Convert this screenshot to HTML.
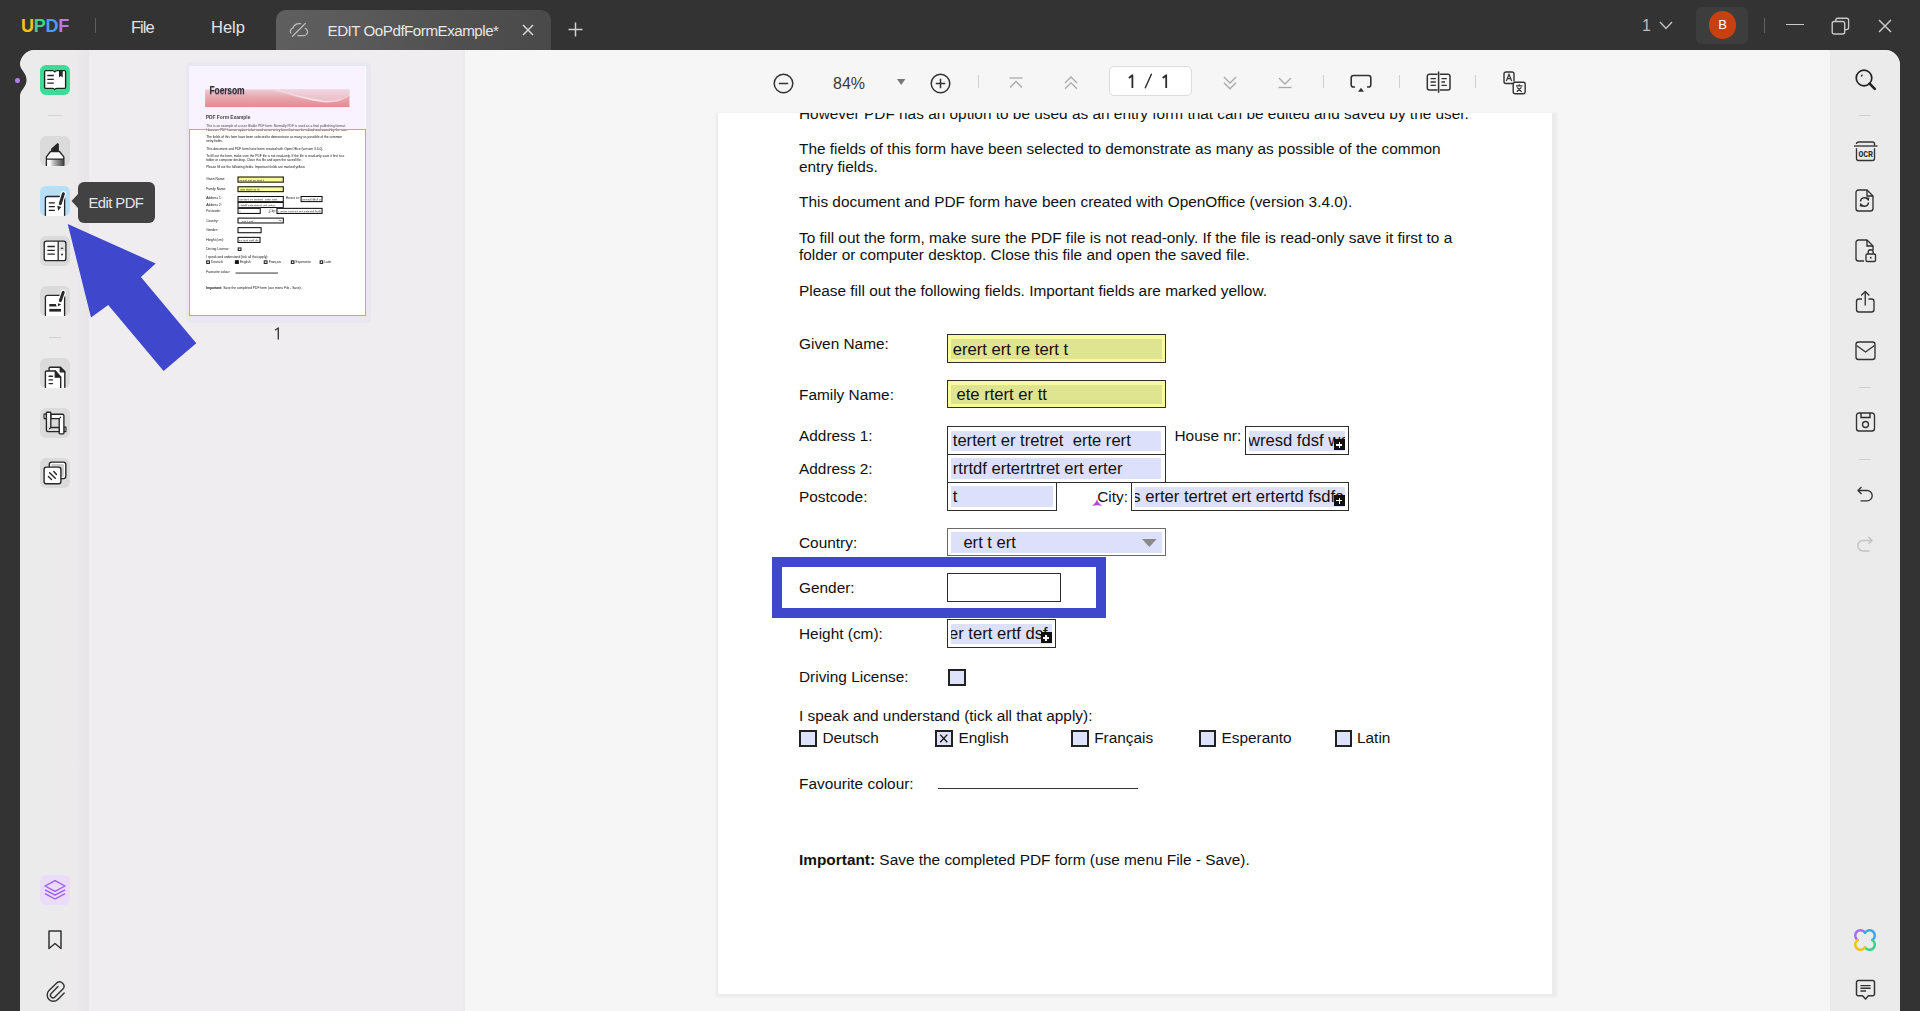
<!DOCTYPE html>
<html><head><meta charset="utf-8"><style>
*{margin:0;padding:0;box-sizing:border-box}
html,body{width:1920px;height:1011px;overflow:hidden;background:#333333;font-family:"Liberation Sans",sans-serif;position:relative}
.a{position:absolute}
svg.a{overflow:visible}
#logo{left:21px;top:16px;font-size:18px;font-weight:bold;letter-spacing:-0.3px;line-height:20px}
.menu{color:#e4e4e4;font-size:16.5px;line-height:20px;top:16.5px}
#tab{left:276px;top:10px;width:275px;height:40px;border-radius:10px 10px 0 0;background:linear-gradient(100deg,#5f5f5f 0%,#5a5a5a 30%,#505050 65%,#494949 100%)}
#tabtxt{left:327.5px;top:21px;color:#e6e6e6;font-size:15.2px;line-height:20px;letter-spacing:-0.5px;white-space:nowrap}
#shell{left:20px;top:50px;width:1880px;height:961px;background:#ececec;border-radius:15px 15px 0 0;overflow:hidden}
#thumbs{left:69px;top:0;width:376px;height:961px;background:#eeedef;border-left:1px solid #e6e5e7}
#main{left:445px;top:0;width:1366px;height:961px;background:#f6f6f6;overflow:hidden}
#rside{left:1811px;top:0;width:69px;height:961px;background:#ecebec}
.ibox{position:absolute;left:40px;width:30px;height:30px;border-radius:6px;background:#dbdbdb;overflow:hidden}
.sep{position:absolute;height:1px;background:#cfcfcf}
.t{position:absolute;white-space:nowrap;line-height:20px;font-size:15.4px;color:#111}
.fld{position:absolute;border:1.5px solid #333}
.fin{position:absolute;left:2.5px;top:3px;right:2.5px;bottom:3px;background:#dde0fa}
.ftx{position:absolute;font-size:16.6px;color:#111;white-space:nowrap;line-height:20px}
.cb{position:absolute;width:17.5px;height:17px;border:2px solid #222;background:#dfe2fb}
.plus{position:absolute;width:11px;height:11px;background:#111}
.plus:before{content:"";position:absolute;left:2.5px;top:5px;width:6px;height:1.5px;background:#fff}
.plus:after{content:"";position:absolute;left:4.75px;top:2.75px;width:1.5px;height:6px;background:#fff}

.thumbpage .fin{display:none}
.thumbpage .fld{border-width:5px;border-color:#111!important}
.thumbpage .ftx{color:#333}
.thumbpage .cb{border-width:5px;background:#fff}
.thumbpage .plus{display:none}
.thumbpage .cb.on{background:#111}
.thumbpage .fav{height:3.5px!important;background:#111!important}
</style></head><body>
<div class="a" id="logo"><span style="color:#f4c21b">U</span><span style="color:#3ed48b">P</span><span style="color:#4b9ded">D</span><span style="color:#b57cf4">F</span></div>
<div class="a" style="left:95px;top:18px;width:1px;height:15px;background:#5e5e5e"></div>
<div class="a menu" style="left:131px;letter-spacing:-1px">File</div>
<div class="a menu" style="left:211px">Help</div>
<div class="a" id="tab"></div>
<svg class="a" style="left:284px;top:16px;" width="30" height="26" viewBox="0 0 30 26" fill="none"><path d="M6.8 17 C5.6 15 6.9 12.5 8.9 12.2 C9.5 9.3 12.6 7.1 16.6 7.7" stroke="#bdbdbd" stroke-width="1.25" stroke-linecap="round"/><path d="M21.3 12.4 C23.6 13.4 24.2 16.4 22.9 18 C22.2 19 21.2 19.5 20 19.5 H13.8" stroke="#bdbdbd" stroke-width="1.25" stroke-linecap="round"/><path d="M8.5 20.3 L21.3 7.5" stroke="#bdbdbd" stroke-width="1.25" stroke-linecap="round"/></svg>
<div class="a" id="tabtxt">EDIT OoPdfFormExample*</div>
<svg class="a" style="left:522px;top:24px;" width="12" height="12" viewBox="0 0 12 12" fill="none"><path d="M1 1 L11 11 M11 1 L1 11" stroke="#d6d6d6" stroke-width="1.5"/></svg>
<svg class="a" style="left:568px;top:22px;" width="15" height="15" viewBox="0 0 15 15" fill="none"><path d="M7.5 0.5 V14.5 M0.5 7.5 H14.5" stroke="#d0d0d0" stroke-width="1.5"/></svg>
<div class="a" style="left:1642px;top:16px;color:#bdbdbd;font-size:16px;line-height:20px">1</div>
<svg class="a" style="left:1659px;top:21px;" width="14" height="9" viewBox="0 0 14 9" fill="none"><path d="M1 1 L7 7.5 L13 1" stroke="#bdbdbd" stroke-width="1.5"/></svg>
<div class="a" style="left:1696px;top:7px;width:52px;height:37px;border-radius:6px;background:#3d3d3d"></div>
<div class="a" style="left:1708.7px;top:11.2px;width:27.6px;height:27.6px;border-radius:50%;background:#c9400f"></div>
<div class="a" style="left:1708.7px;top:15px;width:27.6px;text-align:center;color:#fff;font-size:13px;line-height:20px">B</div>
<div class="a" style="left:1764px;top:18px;width:1px;height:15px;background:#606060"></div>
<div class="a" style="left:1786px;top:23.5px;width:18px;height:1.5px;background:#c8c8c8"></div>
<svg class="a" style="left:1831px;top:17px;" width="20" height="18" viewBox="0 0 20 18" fill="none"><rect x="1.2" y="4.5" width="12.5" height="12.5" rx="2" stroke="#c8c8c8" stroke-width="1.4"/><path d="M4.8 4.3 V3.2 A2 2 0 0 1 6.8 1.2 H15.6 A2 2 0 0 1 17.6 3.2 V10.6 A2 2 0 0 1 15.6 12.6 H14" stroke="#c8c8c8" stroke-width="1.35"/></svg>
<svg class="a" style="left:1878px;top:19px;" width="14" height="14" viewBox="0 0 14 14" fill="none"><path d="M1 1 L13 13 M13 1 L1 13" stroke="#c8c8c8" stroke-width="1.5"/></svg>
<div class="a" style="left:20px;top:50px;width:1880px;height:961px;background:#ececec;border-radius:15px 15px 0 0"></div>
<div class="a" style="left:20px;top:50px;width:69px;height:961px;background:linear-gradient(90deg,#ebebeb 0,#ecebeb 30px,#eceaeb 55px,#e9e7ea 62px,#e8e6e9 69px);border-top-left-radius:15px"></div>
<div class="a" style="left:89px;top:50px;width:376px;height:961px;background:#efedf0"></div>
<div class="a" style="left:462px;top:50px;width:3px;height:961px;background:linear-gradient(90deg,#efedf0,#eae8eb)"></div>
<div class="a" style="left:465px;top:50px;width:1365px;height:961px;background:#f6f6f7"></div>
<div class="a" style="left:1830px;top:50px;width:70px;height:961px;background:#ecebec;border-top-right-radius:15px"></div>
<svg class="a" style="left:0px;top:60px;" width="30" height="40" viewBox="0 0 30 40" fill="none"><path d="M0 0 H20 V4.5 C20.5 10.5 26.5 12.5 26.5 20 C26.5 27.5 20.5 29.5 20 35.5 V40 H0 Z" fill="#333"/></svg>
<div class="a" style="left:15px;top:77.5px;width:5px;height:5px;border-radius:50%;background:#b67cf0"></div>
<div class="ibox" style="top:65px;background:#3ddb98"></div>
<svg class="a" style="left:40px;top:65px;" width="30" height="30" viewBox="0 0 30 30" fill="none"><path d="M5.6 5.6 H12.6 Q14 5.6 14.8 6.9 Q15.6 5.6 17 5.6 H24.6 Q25.6 5.6 25.6 6.6 V22.3 Q25.6 23.3 24.6 23.3 H17 Q15.6 23.3 14.8 24.5 Q14 23.3 12.6 23.3 H5.6 Q4.6 23.3 4.6 22.3 V6.6 Q4.6 5.6 5.6 5.6 Z" fill="#fff" stroke="#10291d" stroke-width="1.35" stroke-linejoin="round"/><path d="M7.3 10.5 H13.8 M7.3 14.4 H13.8 M7.3 18.2 H13.8" stroke="#262626" stroke-width="1.3"/><path d="M19 5.8 V12.6 L20.85 10.9 L22.7 12.6 V5.8 Z" fill="#262626"/></svg>
<div class="sep" style="left:48px;top:115px;width:14px;background:#d4d4d4"></div>
<div class="ibox" style="top:136px;overflow:hidden"><svg class="a" style="left:0;top:0" width="30" height="30" viewBox="0 0 30 30" fill="none"><defs><linearGradient id="hg" x1="0" x2="1"><stop offset="0" stop-color="#fff"/><stop offset=".2" stop-color="#f4f4f4"/><stop offset=".4" stop-color="#bdbdbd"/><stop offset=".65" stop-color="#8e8e8e"/><stop offset="1" stop-color="#4a4a4a"/></linearGradient></defs><path d="M11.1 15 V12.8 L17.5 7.1 L18.9 8.1 V15 Z" fill="#262626"/><path d="M10.5 15.5 H19.5 L23.8 20.9 V31 H6.4 V20.9 Z" fill="#fff" stroke="#262626" stroke-width="1.35" stroke-linejoin="round"/><rect x="7.1" y="23.1" width="16" height="8" fill="url(#hg)"/><path d="M6.4 23.1 H23.8" stroke="#262626" stroke-width="1.35"/></svg></div>
<div class="ibox" style="top:186px;background:linear-gradient(180deg,#b5dff8,#b9ddf6)"><svg class="a" style="left:0;top:0" width="30" height="30" viewBox="0 0 30 30" fill="none"><path d="M5.4 31 V12.5 A2 2 0 0 1 7.4 10.5 H22.6 A2 2 0 0 1 24.6 12.5 V31 Z" fill="#fff" stroke="#1c2630" stroke-width="1.35"/><path d="M8.8 16.9 H14.8 M8.8 20.6 H14.8 M8.8 24.4 H14.8" stroke="#1e1e1e" stroke-width="1.3"/><path d="M23.4 7.7 L20.3 17.6" stroke="#fff" stroke-width="5.2" stroke-linecap="round"/><path d="M23.4 7.7 L20.3 17.6" stroke="#2a2a2a" stroke-width="3" stroke-linecap="round"/><path d="M17.3 19.8 L21.3 21 L18.2 24.8 Z" fill="#2a2a2a"/></svg></div>
<div class="ibox" style="top:236px"><svg class="a" style="left:0;top:0" width="30" height="30" viewBox="0 0 30 30" fill="none"><rect x="4.2" y="5.1" width="21.7" height="19.5" rx="2.2" fill="#fff"/><path d="M18.9 5.8 H23.7 A1.5 1.5 0 0 1 25.2 7.3 V15 H18.9 Z" fill="#e2e2e2"/><rect x="4.2" y="5.1" width="21.7" height="19.5" rx="2.2" stroke="#262626" stroke-width="1.35"/><path d="M18.2 5.1 V24.6" stroke="#2e2e2e" stroke-width="1.35"/><path d="M7.4 10.5 H14.8 M7.4 14.4 H14.8 M7.4 18.2 H14.8" stroke="#262626" stroke-width="1.3"/><path d="M20.5 13.1 L22 10.9 L23.5 13.1 Z M20.5 17.8 L22 20 L23.5 17.8 Z" fill="#333"/></svg></div>
<div class="ibox" style="top:286px"><svg class="a" style="left:0;top:0" width="30" height="30" viewBox="0 0 30 30" fill="none"><path d="M5.4 31 V11.3 A2 2 0 0 1 7.4 9.3 H22.6 A2 2 0 0 1 24.6 11.3 V31 Z" fill="#fff" stroke="#262626" stroke-width="1.35"/><path d="M9.3 17.9 H15.8 L16.7 20.6 H9.3 Z" fill="#262626"/><rect x="9.3" y="22.9" width="11.7" height="2.7" fill="#262626"/><path d="M23.3 6.3 L20.4 14.6" stroke="#fff" stroke-width="5.2" stroke-linecap="round"/><path d="M23.3 6.3 L20.4 14.6" stroke="#2a2a2a" stroke-width="3" stroke-linecap="round"/><path d="M17.9 17.2 L21.2 18.2 L18.1 20.6 Z" fill="#2a2a2a"/></svg></div>
<div class="sep" style="left:49px;top:337px;width:12px;background:#d0d0d0"></div>
<div class="ibox" style="top:358px"><svg class="a" style="left:0;top:0" width="30" height="30" viewBox="0 0 30 30" fill="none"><path d="M9.1 13 V10.3 A1 1 0 0 1 10.1 9.3 H20.2 L24.8 13.8 V31 H20.7" fill="#fff" stroke="#262626" stroke-width="1.4" stroke-linejoin="round"/><path d="M20.2 9.3 V13.8 H24.8 Z" fill="#262626" stroke="#262626" stroke-width="1.2" stroke-linejoin="round"/><path d="M5.4 31 V14 A1 1 0 0 1 6.4 13 H15.2 L20.7 19.2 V31" fill="#fff" stroke="#262626" stroke-width="1.4" stroke-linejoin="round"/><path d="M15.2 13 V19.2 H20.7 Z" fill="#262626" stroke="#262626" stroke-width="1.2" stroke-linejoin="round"/><path d="M9.1 18.2 H12.5 M9.1 21.9 H12.5 M9.1 25.6 H12.5" stroke="#262626" stroke-width="1.4" stroke-linecap="round"/></svg></div>
<div class="ibox" style="top:408px"><svg class="a" style="left:0;top:0" width="30" height="30" viewBox="0 0 30 30" fill="none"><defs><linearGradient id="cg" x1="0" x2="0" y1="0" y2="1"><stop offset="0" stop-color="#fff"/><stop offset="1" stop-color="#d8d8d8"/></linearGradient></defs><rect x="10.8" y="10.6" width="8.4" height="8.9" fill="#dadada"/><path d="M4.2 6.2 H6.4 V10.6 H4.2 Q3.6 8.4 4.2 6.2 Z" fill="#fff" stroke="#262626" stroke-width="1.2"/><path d="M23.9 19.2 H25.8 Q26.4 21.4 25.8 23.6 H23.9 Z" fill="#fff" stroke="#262626" stroke-width="1.2"/><path d="M10.8 6.2 H22.4 A1.5 1.5 0 0 1 23.9 7.7 V25 A0.8 0.8 0 0 1 23.1 25.8 H20 A0.8 0.8 0 0 1 19.2 25 V10.6 H10.8 Z" fill="#fff" stroke="#262626" stroke-width="1.35" stroke-linejoin="round"/><path d="M7.2 4.2 H10 A0.8 0.8 0 0 1 10.8 5 V19.5 H19.2 V23.6 H7.9 A1.5 1.5 0 0 1 6.4 22.1 V5 A0.8 0.8 0 0 1 7.2 4.2 Z" fill="url(#cg)" stroke="#262626" stroke-width="1.35" stroke-linejoin="round"/><path d="M9.1 21.2 L10.8 19.5 M19.2 10.6 L21 8.8" stroke="#262626" stroke-width="1.1"/></svg></div>
<div class="ibox" style="top:458px"><svg class="a" style="left:0;top:0" width="30" height="30" viewBox="0 0 30 30" fill="none"><rect x="9.3" y="4.1" width="16.5" height="16.5" rx="2.3" fill="#fff" stroke="#262626" stroke-width="1.4"/><rect x="11.2" y="6" width="12.7" height="12.7" rx="1" fill="#cdcdcd"/><rect x="4.1" y="9.1" width="16.8" height="16.7" rx="2.3" fill="#fff" stroke="#262626" stroke-width="1.4"/><path d="M13.8 13.5 L16.5 16.4 M9.6 14.8 L15.3 20.2 M8.4 18.5 L11.5 21.4" stroke="#262626" stroke-width="1.4" stroke-linecap="round"/></svg></div>
<div class="ibox" style="top:874.5px;background:#ecdcfb"></div>
<svg class="a" style="left:40px;top:874.5px;" width="30" height="30" viewBox="0 0 30 30" fill="none"><path d="M15 5.6 L25 11 L15 16.4 L5 11 Z" stroke="#9a5cf2" stroke-width="1.4" stroke-linejoin="round"/><path d="M5 14.8 L15 20.2 L25 14.8 M5 18.6 L15 24 L25 18.6" stroke="#9a5cf2" stroke-width="1.4" stroke-linejoin="round"/></svg>
<svg class="a" style="left:47px;top:930px;" width="16" height="20" viewBox="0 0 16 20" fill="none"><path d="M2 1 H14 V18.5 L8 13.5 L2 18.5 Z" stroke="#333" stroke-width="1.5" stroke-linejoin="round"/></svg>
<svg class="a" style="left:45px;top:979px;" width="22" height="23" viewBox="0 0 22 23" fill="none"><path d="M13 7.6 L6.2 14.4 A2.6 2.6 0 0 0 9.9 18.1 L17.9 10.1 A4.4 4.4 0 0 0 11.7 3.9 L4 11.6 A6.2 6.2 0 0 0 12.8 20.4 L19.2 14" stroke="#333" stroke-width="1.4" stroke-linecap="round"/></svg>
<div class="a" style="left:186px;top:62px;width:185px;height:261px;border-radius:5px;background:#e9e7ef"></div>
<div class="a" style="left:189px;top:66px;width:176.5px;height:250.2px;overflow:hidden;background:#fff">
<div class="a thumbpage" style="left:0;top:0;width:834px;height:1182px;transform:scale(0.2117);transform-origin:0 0">
<svg class="a" style="left:76px;top:110px" width="682" height="84" viewBox="0 0 682 84"><defs><linearGradient id="bnt" x1="0" y1="0" x2="0" y2="1"><stop offset="0" stop-color="#f3d0d0"/><stop offset=".45" stop-color="#eb9e99"/><stop offset="1" stop-color="#e47a73"/></linearGradient><linearGradient id="bwt" x1="0" y1="0" x2="1" y2="0"><stop offset="0" stop-color="#fff" stop-opacity="0"/><stop offset=".5" stop-color="#fff" stop-opacity=".8"/><stop offset="1" stop-color="#fff" stop-opacity=".5"/></linearGradient></defs><rect width="682" height="84" fill="url(#bnt)"/><path d="M300 0 Q420 30 520 55 Q620 70 682 20 L682 0 Z" fill="#f8e2e2" opacity=".55"/><path d="M330 0 Q440 40 560 58 Q640 62 682 25" stroke="url(#bwt)" stroke-width="7" fill="none"/></svg>
<div class="t" style="left:97px;top:83.8px;font-size:53px;line-height:60px;font-weight:bold;color:#000;letter-spacing:-1px;text-shadow:0 6px 5px rgba(0,0,0,.45);transform:scaleX(.76);transform-origin:0 0">Foersom</div>
<div class="t" style="left:79px;top:230.5px;font-size:23px;font-weight:bold;line-height:24px;color:#111">PDF Form Example</div>
<div class="t" style="left:81.00px;top:274.50px;font-size:15.4px;font-weight:normal;color:#111;">This is an example of a user fillable PDF form. Normally PDF is used as a final publishing format.</div>
<div class="t" style="left:81.00px;top:291.70px;font-size:15.4px;font-weight:normal;color:#111;">However PDF has an option to be used as an entry form that can be edited and saved by the user.</div>
<div class="t" style="left:81.00px;top:327.40px;font-size:15.4px;font-weight:normal;color:#111;">The fields of this form have been selected to demonstrate as many as possible of the common</div>
<div class="t" style="left:81.00px;top:344.60px;font-size:15.4px;font-weight:normal;color:#111;">entry fields.</div>
<div class="t" style="left:81.00px;top:380.40px;font-size:15.4px;font-weight:normal;color:#111;">This document and PDF form have been created with OpenOffice (version 3.4.0).</div>
<div class="t" style="left:81.00px;top:415.90px;font-size:15.4px;font-weight:normal;color:#111;">To fill out the form, make sure the PDF file is not read-only. If the file is read-only save it first to a</div>
<div class="t" style="left:81.00px;top:433.30px;font-size:15.4px;font-weight:normal;color:#111;">folder or computer desktop. Close this file and open the saved file.</div>
<div class="t" style="left:81.00px;top:468.80px;font-size:15.4px;font-weight:normal;color:#111;">Please fill out the following fields. Important fields are marked yellow.</div>
<div class="t" style="left:81.00px;top:522.20px;font-size:15.4px;font-weight:normal;color:#111;">Given Name:</div>
<div class="t" style="left:81.00px;top:573.20px;font-size:15.4px;font-weight:normal;color:#111;">Family Name:</div>
<div class="t" style="left:81.00px;top:613.80px;font-size:15.4px;font-weight:normal;color:#111;">Address 1:</div>
<div class="t" style="left:456.50px;top:613.50px;font-size:15.4px;font-weight:normal;color:#111;">House nr:</div>
<div class="t" style="left:81.00px;top:646.75px;font-size:15.4px;font-weight:normal;color:#111;">Address 2:</div>
<div class="t" style="left:81.00px;top:674.70px;font-size:15.4px;font-weight:normal;color:#111;">Postcode:</div>
<div class="t" style="left:379.20px;top:674.80px;font-size:15.4px;font-weight:normal;color:#111;">City:</div>
<div class="t" style="left:81.00px;top:721.00px;font-size:15.4px;font-weight:normal;color:#111;">Country:</div>
<div class="t" style="left:81.00px;top:766.30px;font-size:15.4px;font-weight:normal;color:#111;">Gender:</div>
<div class="t" style="left:81.00px;top:812.20px;font-size:15.4px;font-weight:normal;color:#111;">Height (cm):</div>
<div class="t" style="left:81.00px;top:855.30px;font-size:15.4px;font-weight:normal;color:#111;">Driving License:</div>
<div class="t" style="left:81.00px;top:894.00px;font-size:15.4px;font-weight:normal;color:#111;">I speak and understand (tick all that apply):</div>
<div class="t" style="left:104.40px;top:916.10px;font-size:15.4px;font-weight:normal;color:#111;">Deutsch</div>
<div class="t" style="left:240.40px;top:916.10px;font-size:15.4px;font-weight:normal;color:#111;">English</div>
<div class="t" style="left:376.20px;top:916.10px;font-size:15.4px;font-weight:normal;color:#111;">Fran&ccedil;ais</div>
<div class="t" style="left:503.50px;top:916.10px;font-size:15.4px;font-weight:normal;color:#111;">Esperanto</div>
<div class="t" style="left:639.00px;top:916.10px;font-size:15.4px;font-weight:normal;color:#111;">Latin</div>
<div class="t" style="left:81.00px;top:962.00px;font-size:15.4px;font-weight:normal;color:#111;">Favourite colour:</div>
<div class="t" style="left:81.00px;top:1038.20px;font-size:15.4px;font-weight:normal;color:#111;"><b>Important:</b> Save the completed PDF form (use menu File - Save).</div>
<div class="fld" style="left:229.00px;top:522.20px;width:218.80px;height:29.10px;border-color:#2e2e2e;background:#f9f99e"><div class="fin" style="background:#dee48f;left:2.6px;top:3.5px;right:3.2px;bottom:3.2px"></div><div style="position:absolute;left:2.6px;top:3px;right:3.2px;bottom:2.6px;overflow:hidden"><div class="ftx" style="left:2.20px;top:2.10px;font-size:16.6px">erert ert re tert t</div></div></div>
<div class="fld" style="left:229.00px;top:568.40px;width:218.80px;height:28.10px;border-color:#2e2e2e;background:#f9f99e"><div class="fin" style="background:#dee48f;left:2.6px;top:3.5px;right:3.2px;bottom:3.2px"></div><div style="position:absolute;left:2.6px;top:3px;right:3.2px;bottom:2.6px;overflow:hidden"><div class="ftx" style="left:5.90px;top:0.70px;font-size:16.6px">ete rtert er tt</div></div></div>
<div class="fld" style="left:229.00px;top:614.40px;width:218.50px;height:28.60px;border-color:#2e2e2e;background:#fff"><div class="fin" style="left:2.6px;top:3.5px;right:3.2px;bottom:2.6px"></div><div style="position:absolute;left:2.6px;top:3px;right:3.2px;bottom:2.6px;overflow:hidden"><div class="ftx" style="left:2.20px;top:0.50px;font-size:16.6px">tertert er tretret&nbsp; erte rert</div></div></div>
<div class="fld" style="left:527.20px;top:614.40px;width:103.80px;height:28.20px;border-color:#2e2e2e;background:#fff"><div class="fin" style="left:2.6px;top:3.5px;right:3.2px;bottom:2.6px"></div><div style="position:absolute;left:2.6px;top:3px;right:3.2px;bottom:2.6px;overflow:hidden"><div class="ftx" style="left:-0.80px;top:0.50px;font-size:16.6px">wresd fdsf wer</div></div><div class="plus" style="left:87.80px;top:12.10px"></div></div>
<div class="fld" style="left:229.00px;top:641.90px;width:218.50px;height:29.10px;border-color:#2e2e2e;background:#fff"><div class="fin" style="left:2.6px;top:3.5px;right:3.2px;bottom:2.6px"></div><div style="position:absolute;left:2.6px;top:3px;right:3.2px;bottom:2.6px;overflow:hidden"><div class="ftx" style="left:2.20px;top:1.15px;font-size:16.6px">rtrtdf ertertrtret ert erter</div></div></div>
<div class="fld" style="left:229.00px;top:669.90px;width:110.20px;height:28.70px;border-color:#2e2e2e;background:#fff"><div class="fin" style="left:2.6px;top:3.5px;right:3.2px;bottom:2.6px"></div><div style="position:absolute;left:2.6px;top:3px;right:3.2px;bottom:2.6px;overflow:hidden"><div class="ftx" style="left:2.20px;top:1.10px;font-size:16.6px">t</div></div></div>
<div class="fld" style="left:413.30px;top:670.40px;width:218.20px;height:28.20px;border-color:#2e2e2e;background:#fff"><div class="fin" style="left:2.6px;top:3.5px;right:3.2px;bottom:2.6px"></div><div style="position:absolute;left:2.6px;top:3px;right:3.2px;bottom:2.6px;overflow:hidden"><div class="ftx" style="left:-17.40px;top:0.70px;font-size:16.6px">ers erter tertret ert ertertd fsdfs</div></div><div class="plus" style="left:201.70px;top:11.60px"></div></div>
<div class="fld" style="left:229.00px;top:715.70px;width:218.80px;height:28.50px;border-color:#6b6b6b;background:#fff"><div class="fin" style="left:2.6px;top:3.5px;right:3.2px;bottom:2.6px"></div><div style="position:absolute;left:2.6px;top:3px;right:3.2px;bottom:2.6px;overflow:hidden"><div class="ftx" style="left:12.80px;top:1.60px;font-size:16.6px">ert t ert</div></div></div>
<div class="fld" style="left:229.00px;top:761.20px;width:113.80px;height:28.40px;border-color:#2e2e2e;background:#fff"></div>
<div class="fld" style="left:229.00px;top:807.10px;width:109.40px;height:28.50px;border-color:#2e2e2e;background:#fff"><div class="fin" style="left:2.6px;top:3.5px;right:3.2px;bottom:2.6px"></div><div style="position:absolute;left:2.6px;top:3px;right:3.2px;bottom:2.6px;overflow:hidden"><div class="ftx" style="left:-1.60px;top:1.40px;font-size:16.6px">er tert ertf dsf</div></div><div class="plus" style="left:92.50px;top:12.40px"></div></div>
<div class="cb" style="left:230.10px;top:856.80px"></div>
<div class="cb" style="left:81.20px;top:917.90px"></div>
<div class="cb on" style="left:217.20px;top:917.90px"><svg class="a" style="left:0;top:0" width="14" height="13" viewBox="0 0 14 13"><path d="M3.2 2.6 L10.3 10.2 M10.3 2.6 L3.2 10.2" stroke="#111" stroke-width="1.3"/></svg></div>
<div class="cb" style="left:353.00px;top:917.90px"></div>
<div class="cb" style="left:480.70px;top:917.90px"></div>
<div class="cb" style="left:616.50px;top:917.90px"></div>
<svg class="a" style="left:423.70000000000005px;top:727.3px" width="15" height="8"><path d="M0 0 L14.7 0 L7.35 8 Z" fill="#8a8a8a"/></svg>
<svg class="a" style="left:373px;top:686px" width="12" height="9"><path d="M6 0.5 Q6.3 4.5 11 7.8 Q6 6.6 1 7.8 Q5.7 4.5 6 0.5 Z" fill="#b04ad8"/></svg>
<div class="a fav" style="left:220.10000000000002px;top:976px;width:200px;height:1.3px;background:#333"></div>
</div>
<div class="a" style="left:0;top:0;width:176px;height:63px;background:rgba(225,200,250,.22)"></div>
</div>
<div class="a" style="left:189px;top:128.8px;width:176.5px;height:187.2px;border:1.5px solid #bd98f2"></div>
<svg class="a" style="left:272px;top:326px;" width="10" height="15" viewBox="0 0 10 15" fill="none"><path d="M3 4.3 L6.3 2 V13.4" stroke="#3a3a3a" stroke-width="1.4" stroke-linejoin="round"/></svg>
<div class="a" style="left:716px;top:113px;width:840.5px;height:884px;background:#ebebeb;filter:blur(1px)"></div>
<div class="a" style="left:465px;top:113px;width:1366px;height:898px;overflow:hidden">

<div class="a" style="left:253px;top:-301px;width:834px;height:1182px;background:#fff;box-shadow:none">
<svg class="a" style="left:76px;top:110px" width="682" height="84" viewBox="0 0 682 84"><defs><linearGradient id="bnm" x1="0" y1="0" x2="0" y2="1"><stop offset="0" stop-color="#f3d0d0"/><stop offset=".45" stop-color="#eb9e99"/><stop offset="1" stop-color="#e47a73"/></linearGradient><linearGradient id="bwm" x1="0" y1="0" x2="1" y2="0"><stop offset="0" stop-color="#fff" stop-opacity="0"/><stop offset=".5" stop-color="#fff" stop-opacity=".8"/><stop offset="1" stop-color="#fff" stop-opacity=".5"/></linearGradient></defs><rect width="682" height="84" fill="url(#bnm)"/><path d="M300 0 Q420 30 520 55 Q620 70 682 20 L682 0 Z" fill="#f8e2e2" opacity=".55"/><path d="M330 0 Q440 40 560 58 Q640 62 682 25" stroke="url(#bwm)" stroke-width="7" fill="none"/></svg>
<div class="t" style="left:97px;top:83.8px;font-size:53px;line-height:60px;font-weight:bold;color:#000;letter-spacing:-1px;text-shadow:0 6px 5px rgba(0,0,0,.45);transform:scaleX(.76);transform-origin:0 0">Foersom</div>
<div class="t" style="left:79px;top:230.5px;font-size:23px;font-weight:bold;line-height:24px;color:#111">PDF Form Example</div>
<div class="t" style="left:81.00px;top:274.50px;font-size:15.4px;font-weight:normal;color:#111;">This is an example of a user fillable PDF form. Normally PDF is used as a final publishing format.</div>
<div class="t" style="left:81.00px;top:291.70px;font-size:15.4px;font-weight:normal;color:#111;">However PDF has an option to be used as an entry form that can be edited and saved by the user.</div>
<div class="t" style="left:81.00px;top:327.40px;font-size:15.4px;font-weight:normal;color:#111;">The fields of this form have been selected to demonstrate as many as possible of the common</div>
<div class="t" style="left:81.00px;top:344.60px;font-size:15.4px;font-weight:normal;color:#111;">entry fields.</div>
<div class="t" style="left:81.00px;top:380.40px;font-size:15.4px;font-weight:normal;color:#111;">This document and PDF form have been created with OpenOffice (version 3.4.0).</div>
<div class="t" style="left:81.00px;top:415.90px;font-size:15.4px;font-weight:normal;color:#111;">To fill out the form, make sure the PDF file is not read-only. If the file is read-only save it first to a</div>
<div class="t" style="left:81.00px;top:433.30px;font-size:15.4px;font-weight:normal;color:#111;">folder or computer desktop. Close this file and open the saved file.</div>
<div class="t" style="left:81.00px;top:468.80px;font-size:15.4px;font-weight:normal;color:#111;">Please fill out the following fields. Important fields are marked yellow.</div>
<div class="t" style="left:81.00px;top:522.20px;font-size:15.4px;font-weight:normal;color:#111;">Given Name:</div>
<div class="t" style="left:81.00px;top:573.20px;font-size:15.4px;font-weight:normal;color:#111;">Family Name:</div>
<div class="t" style="left:81.00px;top:613.80px;font-size:15.4px;font-weight:normal;color:#111;">Address 1:</div>
<div class="t" style="left:456.50px;top:613.50px;font-size:15.4px;font-weight:normal;color:#111;">House nr:</div>
<div class="t" style="left:81.00px;top:646.75px;font-size:15.4px;font-weight:normal;color:#111;">Address 2:</div>
<div class="t" style="left:81.00px;top:674.70px;font-size:15.4px;font-weight:normal;color:#111;">Postcode:</div>
<div class="t" style="left:379.20px;top:674.80px;font-size:15.4px;font-weight:normal;color:#111;">City:</div>
<div class="t" style="left:81.00px;top:721.00px;font-size:15.4px;font-weight:normal;color:#111;">Country:</div>
<div class="t" style="left:81.00px;top:766.30px;font-size:15.4px;font-weight:normal;color:#111;">Gender:</div>
<div class="t" style="left:81.00px;top:812.20px;font-size:15.4px;font-weight:normal;color:#111;">Height (cm):</div>
<div class="t" style="left:81.00px;top:855.30px;font-size:15.4px;font-weight:normal;color:#111;">Driving License:</div>
<div class="t" style="left:81.00px;top:894.00px;font-size:15.4px;font-weight:normal;color:#111;">I speak and understand (tick all that apply):</div>
<div class="t" style="left:104.40px;top:916.10px;font-size:15.4px;font-weight:normal;color:#111;">Deutsch</div>
<div class="t" style="left:240.40px;top:916.10px;font-size:15.4px;font-weight:normal;color:#111;">English</div>
<div class="t" style="left:376.20px;top:916.10px;font-size:15.4px;font-weight:normal;color:#111;">Fran&ccedil;ais</div>
<div class="t" style="left:503.50px;top:916.10px;font-size:15.4px;font-weight:normal;color:#111;">Esperanto</div>
<div class="t" style="left:639.00px;top:916.10px;font-size:15.4px;font-weight:normal;color:#111;">Latin</div>
<div class="t" style="left:81.00px;top:962.00px;font-size:15.4px;font-weight:normal;color:#111;">Favourite colour:</div>
<div class="t" style="left:81.00px;top:1038.20px;font-size:15.4px;font-weight:normal;color:#111;"><b>Important:</b> Save the completed PDF form (use menu File - Save).</div>
<div class="fld" style="left:229.00px;top:522.20px;width:218.80px;height:29.10px;border-color:#2e2e2e;background:#f9f99e"><div class="fin" style="background:#dee48f;left:2.6px;top:3.5px;right:3.2px;bottom:3.2px"></div><div style="position:absolute;left:2.6px;top:3px;right:3.2px;bottom:2.6px;overflow:hidden"><div class="ftx" style="left:2.20px;top:2.10px;font-size:16.6px">erert ert re tert t</div></div></div>
<div class="fld" style="left:229.00px;top:568.40px;width:218.80px;height:28.10px;border-color:#2e2e2e;background:#f9f99e"><div class="fin" style="background:#dee48f;left:2.6px;top:3.5px;right:3.2px;bottom:3.2px"></div><div style="position:absolute;left:2.6px;top:3px;right:3.2px;bottom:2.6px;overflow:hidden"><div class="ftx" style="left:5.90px;top:0.70px;font-size:16.6px">ete rtert er tt</div></div></div>
<div class="fld" style="left:229.00px;top:614.40px;width:218.50px;height:28.60px;border-color:#2e2e2e;background:#fff"><div class="fin" style="left:2.6px;top:3.5px;right:3.2px;bottom:2.6px"></div><div style="position:absolute;left:2.6px;top:3px;right:3.2px;bottom:2.6px;overflow:hidden"><div class="ftx" style="left:2.20px;top:0.50px;font-size:16.6px">tertert er tretret&nbsp; erte rert</div></div></div>
<div class="fld" style="left:527.20px;top:614.40px;width:103.80px;height:28.20px;border-color:#2e2e2e;background:#fff"><div class="fin" style="left:2.6px;top:3.5px;right:3.2px;bottom:2.6px"></div><div style="position:absolute;left:2.6px;top:3px;right:3.2px;bottom:2.6px;overflow:hidden"><div class="ftx" style="left:-0.80px;top:0.50px;font-size:16.6px">wresd fdsf wer</div></div><div class="plus" style="left:87.80px;top:12.10px"></div></div>
<div class="fld" style="left:229.00px;top:641.90px;width:218.50px;height:29.10px;border-color:#2e2e2e;background:#fff"><div class="fin" style="left:2.6px;top:3.5px;right:3.2px;bottom:2.6px"></div><div style="position:absolute;left:2.6px;top:3px;right:3.2px;bottom:2.6px;overflow:hidden"><div class="ftx" style="left:2.20px;top:1.15px;font-size:16.6px">rtrtdf ertertrtret ert erter</div></div></div>
<div class="fld" style="left:229.00px;top:669.90px;width:110.20px;height:28.70px;border-color:#2e2e2e;background:#fff"><div class="fin" style="left:2.6px;top:3.5px;right:3.2px;bottom:2.6px"></div><div style="position:absolute;left:2.6px;top:3px;right:3.2px;bottom:2.6px;overflow:hidden"><div class="ftx" style="left:2.20px;top:1.10px;font-size:16.6px">t</div></div></div>
<div class="fld" style="left:413.30px;top:670.40px;width:218.20px;height:28.20px;border-color:#2e2e2e;background:#fff"><div class="fin" style="left:2.6px;top:3.5px;right:3.2px;bottom:2.6px"></div><div style="position:absolute;left:2.6px;top:3px;right:3.2px;bottom:2.6px;overflow:hidden"><div class="ftx" style="left:-17.40px;top:0.70px;font-size:16.6px">ers erter tertret ert ertertd fsdfs</div></div><div class="plus" style="left:201.70px;top:11.60px"></div></div>
<div class="fld" style="left:229.00px;top:715.70px;width:218.80px;height:28.50px;border-color:#6b6b6b;background:#fff"><div class="fin" style="left:2.6px;top:3.5px;right:3.2px;bottom:2.6px"></div><div style="position:absolute;left:2.6px;top:3px;right:3.2px;bottom:2.6px;overflow:hidden"><div class="ftx" style="left:12.80px;top:1.60px;font-size:16.6px">ert t ert</div></div></div>
<div class="fld" style="left:229.00px;top:761.20px;width:113.80px;height:28.40px;border-color:#2e2e2e;background:#fff"></div>
<div class="fld" style="left:229.00px;top:807.10px;width:109.40px;height:28.50px;border-color:#2e2e2e;background:#fff"><div class="fin" style="left:2.6px;top:3.5px;right:3.2px;bottom:2.6px"></div><div style="position:absolute;left:2.6px;top:3px;right:3.2px;bottom:2.6px;overflow:hidden"><div class="ftx" style="left:-1.60px;top:1.40px;font-size:16.6px">er tert ertf dsf</div></div><div class="plus" style="left:92.50px;top:12.40px"></div></div>
<div class="cb" style="left:230.10px;top:856.80px"></div>
<div class="cb" style="left:81.20px;top:917.90px"></div>
<div class="cb on" style="left:217.20px;top:917.90px"><svg class="a" style="left:0;top:0" width="14" height="13" viewBox="0 0 14 13"><path d="M3.2 2.6 L10.3 10.2 M10.3 2.6 L3.2 10.2" stroke="#111" stroke-width="1.3"/></svg></div>
<div class="cb" style="left:353.00px;top:917.90px"></div>
<div class="cb" style="left:480.70px;top:917.90px"></div>
<div class="cb" style="left:616.50px;top:917.90px"></div>
<svg class="a" style="left:423.70000000000005px;top:727.3px" width="15" height="8"><path d="M0 0 L14.7 0 L7.35 8 Z" fill="#8a8a8a"/></svg>
<svg class="a" style="left:373px;top:686px" width="12" height="9"><path d="M6 0.5 Q6.3 4.5 11 7.8 Q6 6.6 1 7.8 Q5.7 4.5 6 0.5 Z" fill="#b04ad8"/></svg>
<div class="a fav" style="left:220.10000000000002px;top:976px;width:200px;height:1.3px;background:#333"></div>
</div></div>
<svg class="a" style="left:773px;top:73px;" width="21" height="21" viewBox="0 0 21 21" fill="none"><circle cx="10.5" cy="10.5" r="9.3" stroke="#333" stroke-width="1.5"/><path d="M5.8 10.5 H15.2" stroke="#333" stroke-width="1.5"/></svg>
<div class="a" style="left:833px;top:74px;color:#3a3a3a;font-size:16px;line-height:20px">84%</div>
<svg class="a" style="left:897px;top:79px;" width="9" height="7" viewBox="0 0 9 7" fill="none"><path d="M0 0 H8.4 L4.2 6 Z" fill="#777"/></svg>
<svg class="a" style="left:930px;top:73px;" width="21" height="21" viewBox="0 0 21 21" fill="none"><circle cx="10.5" cy="10.5" r="9.3" stroke="#333" stroke-width="1.5"/><path d="M5.8 10.5 H15.2 M10.5 5.8 V15.2" stroke="#333" stroke-width="1.5"/></svg>
<div class="a" style="left:978px;top:75px;width:1px;height:13px;background:#d0d0d0"></div>
<div class="a" style="left:1323px;top:75px;width:1px;height:13px;background:#d0d0d0"></div>
<div class="a" style="left:1399px;top:75px;width:1px;height:13px;background:#d0d0d0"></div>
<div class="a" style="left:1475px;top:75px;width:1px;height:13px;background:#d0d0d0"></div>
<svg class="a" style="left:1009px;top:77px;" width="14" height="12" viewBox="0 0 14 12" fill="none"><path d="M0.5 1 H13.5" stroke="#a9a9a9" stroke-width="1.3"/><path d="M1 10.5 L7 4.5 L13 10.5" stroke="#a9a9a9" stroke-width="1.3"/></svg>
<svg class="a" style="left:1064px;top:76px;" width="14" height="14" viewBox="0 0 14 14" fill="none"><path d="M1 7 L7 1 L13 7 M1 12.8 L7 6.8 L13 12.8" stroke="#a9a9a9" stroke-width="1.3"/></svg>
<div class="a" style="left:1109px;top:66px;width:83px;height:29.5px;border:1px solid #dcdcdc;border-radius:5px;background:#fff"></div>
<svg class="a" style="left:1120px;top:70px;" width="60" height="22" viewBox="0 0 60 22" fill="none"><path d="M8.9 8 L12.4 5.2 V18" stroke="#2b2b2b" stroke-width="1.8" stroke-linejoin="round"/><path d="M25.3 17.8 L31.4 4.2" stroke="#2b2b2b" stroke-width="1.4" stroke-linecap="round"/><path d="M42.7 8 L46.2 5.2 V18" stroke="#2b2b2b" stroke-width="1.8" stroke-linejoin="round"/></svg>
<svg class="a" style="left:1223px;top:76px;" width="14" height="14" viewBox="0 0 14 14" fill="none"><path d="M1 1 L7 7 L13 1 M1 6.8 L7 12.8 L13 6.8" stroke="#a9a9a9" stroke-width="1.3"/></svg>
<svg class="a" style="left:1278px;top:77px;" width="14" height="12" viewBox="0 0 14 12" fill="none"><path d="M1 1 L7 7 L13 1" stroke="#a9a9a9" stroke-width="1.3"/><path d="M0.5 10.5 H13.5" stroke="#a9a9a9" stroke-width="1.3"/></svg>
<svg class="a" style="left:1350px;top:74px;" width="23" height="19" viewBox="0 0 23 19" fill="none"><path d="M5 13 H3.5 A2.3 2.3 0 0 1 1.2 10.7 V3.8 A2.3 2.3 0 0 1 3.5 1.5 H18.5 A2.3 2.3 0 0 1 20.8 3.8 V10.7 A2.3 2.3 0 0 1 18.5 13 H17" stroke="#333" stroke-width="1.6"/><path d="M8 17.8 L11 13.8 L14 17.8 Z" fill="#333"/></svg>
<svg class="a" style="left:1426px;top:71px;" width="26" height="23" viewBox="0 0 26 23" fill="none"><path d="M11.5 3.2 H3.3 A2 2 0 0 0 1.3 5.2 V17 A2 2 0 0 0 3.3 19 H11.5 M13.8 3.2 H22 A2 2 0 0 1 24 5.2 V17 A2 2 0 0 1 22 19 H13.8" stroke="#333" stroke-width="1.5"/><path d="M12.6 0.5 V21.8" stroke="#333" stroke-width="1.5"/><path d="M4.5 7.6 H9.8 M4.5 11 H9.8 M4.5 14.4 H9.8 M15.5 7.6 H20.8 M15.5 11 H19 M15.5 14.4 H20.8" stroke="#333" stroke-width="1.4"/></svg>
<svg class="a" style="left:1503px;top:71px;" width="24" height="24" viewBox="0 0 24 24" fill="none"><path d="M11 10.5 V3 A2 2 0 0 0 9 1 H3 A2 2 0 0 0 1 3 V10.5 A2 2 0 0 0 3 12.5 H10.2" stroke="#333" stroke-width="1.4"/><path d="M3.3 10 L6 3.3 L8.7 10 M4.3 7.6 H7.7" stroke="#333" stroke-width="1.2"/><rect x="10.2" y="11.2" width="12" height="11.5" rx="2" fill="#f7f7f7" stroke="#333" stroke-width="1.4"/><path d="M13 14.8 H19.4 M16.2 13.2 V14.8 M14 16.4 L18.6 20.8 M18.4 16.4 L13.8 20.8" stroke="#333" stroke-width="1.2"/></svg>
<svg class="a" style="left:1854px;top:68px;" width="24" height="24" viewBox="0 0 24 24" fill="none"><circle cx="10" cy="10" r="7.8" stroke="#222" stroke-width="1.7"/><path d="M15.6 15.6 L20.8 20.8" stroke="#222" stroke-width="2.6" stroke-linecap="round"/><path d="M7.2 8.5 A3.3 3.3 0 0 1 8.5 6.7" stroke="#222" stroke-width="1.3"/></svg>
<div class="sep" style="left:1859px;top:115px;width:12px;background:#cfcfcf"></div>
<div class="sep" style="left:1859px;top:387px;width:12px;background:#cfcfcf"></div>
<div class="sep" style="left:1859px;top:458.5px;width:12px;background:#cfcfcf"></div>
<svg class="a" style="left:1853px;top:139px;" width="26" height="23" viewBox="0 0 26 23" fill="none"><path d="M3.5 5 A2 2 0 0 1 5.5 3 H19.5 A2 2 0 0 1 21.5 5 V6.8" stroke="#333" stroke-width="1.35"/><path d="M1 7 H24.5" stroke="#333" stroke-width="1.35"/><path d="M3.5 9.2 V19.5 A2 2 0 0 0 5.5 21.5 H19.5 A2 2 0 0 0 21.5 19.5 V9.2" stroke="#333" stroke-width="1.35"/><text x="12.6" y="17.6" text-anchor="middle" font-family="Liberation Mono" font-weight="bold" font-size="8.2" fill="#2a2a2a" letter-spacing="-0.2">OCR</text></svg>
<svg class="a" style="left:1855px;top:189px;" width="20" height="24" viewBox="0 0 20 24" fill="none"><path d="M3.5 1 H12 L18 7 V19.5 A2.5 2.5 0 0 1 15.5 22 H3.5 A2.5 2.5 0 0 1 1 19.5 V3.5 A2.5 2.5 0 0 1 3.5 1 Z" stroke="#333" stroke-width="1.35" stroke-linejoin="round"/><path d="M12 1 V7 H18" stroke="#2a2a2a" stroke-width="1.3"/><path d="M5.5 12.5 A4 4 0 0 1 12.8 10.5 M13.5 13.5 A4 4 0 0 1 6.2 15.5" stroke="#2a2a2a" stroke-width="1.4"/><path d="M11.3 9 L13.6 9.3 L13.2 11.6 M7.7 17 L5.4 16.7 L5.8 14.4" stroke="#2a2a2a" stroke-width="1.3"/></svg>
<svg class="a" style="left:1855px;top:239px;" width="22" height="24" viewBox="0 0 22 24" fill="none"><path d="M9 22 H3.5 A2.5 2.5 0 0 1 1 19.5 V3.5 A2.5 2.5 0 0 1 3.5 1 H12 L18 7 V11" stroke="#333" stroke-width="1.35" stroke-linejoin="round"/><path d="M12 1 V7 H18" stroke="#2a2a2a" stroke-width="1.3"/><rect x="11" y="15" width="9.5" height="7.5" rx="1.2" stroke="#333" stroke-width="1.35"/><path d="M13.2 15 V13.2 A2.5 2.5 0 0 1 18.2 13.2 V15" stroke="#333" stroke-width="1.35"/><circle cx="15.75" cy="18.7" r="0.9" fill="#2a2a2a"/></svg>
<svg class="a" style="left:1855px;top:290px;" width="21" height="23" viewBox="0 0 21 23" fill="none"><path d="M7 9 H4 A2.5 2.5 0 0 0 1.5 11.5 V19.5 A2.5 2.5 0 0 0 4 22 H16.5 A2.5 2.5 0 0 0 19 19.5 V11.5 A2.5 2.5 0 0 0 16.5 9 H13.5" stroke="#333" stroke-width="1.35"/><path d="M10.25 15.5 V1.5 M6.2 5.5 L10.25 1.5 L14.3 5.5" stroke="#333" stroke-width="1.35" stroke-linejoin="round"/></svg>
<svg class="a" style="left:1855px;top:341px;" width="21" height="20" viewBox="0 0 21 20" fill="none"><rect x="1" y="1" width="19" height="17.5" rx="2.5" stroke="#333" stroke-width="1.35"/><path d="M1.5 4.5 L10.5 11 L19.5 4.5" stroke="#333" stroke-width="1.35"/></svg>
<svg class="a" style="left:1855px;top:412px;" width="21" height="21" viewBox="0 0 21 21" fill="none"><path d="M4 1 H17 A2.5 2.5 0 0 1 19.5 3.5 V16.5 A2.5 2.5 0 0 1 17 19 H4 A2.5 2.5 0 0 1 1.5 16.5 V3.5 A2.5 2.5 0 0 1 4 1 Z" stroke="#333" stroke-width="1.35"/><path d="M6 1 V5.5 H15 V1" stroke="#2a2a2a" stroke-width="1.4"/><circle cx="10.5" cy="12.5" r="3" stroke="#333" stroke-width="1.35"/></svg>
<svg class="a" style="left:1856px;top:485px;" width="18" height="17" viewBox="0 0 18 17" fill="none"><path d="M2 5.5 H11 A5.2 5.2 0 0 1 11 15.9 H4.5" stroke="#333" stroke-width="1.35"/><path d="M5.5 2 L2 5.5 L5.5 9" stroke="#333" stroke-width="1.35" stroke-linejoin="round"/></svg>
<svg class="a" style="left:1856px;top:535px;" width="18" height="17" viewBox="0 0 18 17" fill="none"><path d="M16 5.5 H7 A5.2 5.2 0 0 0 7 15.9 H13.5" stroke="#c4c4c4" stroke-width="1.5"/><path d="M12.5 2 L16 5.5 L12.5 9" stroke="#c4c4c4" stroke-width="1.5" stroke-linejoin="round"/></svg>
<svg class="a" style="left:1853px;top:928px;" width="24" height="24" viewBox="0 0 24 24" fill="none"><path d="M12 4.7 A5.3 5.3 0 1 0 4.7 12" stroke="#a46ef4" stroke-width="2.5" stroke-linecap="round"/><path d="M12 4.7 A5.3 5.3 0 1 1 19.3 12" stroke="#3aa6ef" stroke-width="2.5" stroke-linecap="round"/><path d="M19.3 12 A5.3 5.3 0 1 1 12 19.3" stroke="#3dcf90" stroke-width="2.5" stroke-linecap="round"/><path d="M12 19.3 A5.3 5.3 0 1 1 4.7 12" stroke="#f4c11d" stroke-width="2.5" stroke-linecap="round"/></svg>
<svg class="a" style="left:1855px;top:979px;" width="22" height="22" viewBox="0 0 22 22" fill="none"><path d="M3.3 1.5 H17.7 A1.8 1.8 0 0 1 19.5 3.3 V15 A1.8 1.8 0 0 1 17.7 16.8 H13.5 L10.5 20 L7.5 16.8 H3.3 A1.8 1.8 0 0 1 1.5 15 V3.3 A1.8 1.8 0 0 1 3.3 1.5 Z" stroke="#333" stroke-width="1.5" stroke-linejoin="round"/><path d="M5.4 6.6 H15.6 M5.4 9.3 H15.6 M5.4 12 H11" stroke="#333" stroke-width="1.4"/></svg>
<div class="a" style="left:772px;top:557.2px;width:334px;height:60.6px;border:10px solid #3f48cc"></div>
<div class="a" style="left:77.5px;top:181.5px;width:77px;height:41px;border-radius:6px;background:#424242"></div>
<svg class="a" style="left:71px;top:194px;" width="8" height="14" viewBox="0 0 8 14" fill="none"><path d="M7 0 L0.5 7 L7 14 Z" fill="#424242"/></svg>
<div class="a" style="left:88.5px;top:192.5px;color:#e6e6e6;font-size:14.8px;line-height:20px;white-space:nowrap;letter-spacing:-0.55px">Edit PDF</div>
<svg class="a" style="left:0px;top:0px;" width="220" height="400" viewBox="0 0 220 400" fill="none"><path d="M67.7 223.9 L155.7 263.5 L140.9 276.9 L196.3 343.2 L163.6 370.9 L108.2 305 L91 317.5 Z" fill="#3f48cc"/></svg>
</body></html>
